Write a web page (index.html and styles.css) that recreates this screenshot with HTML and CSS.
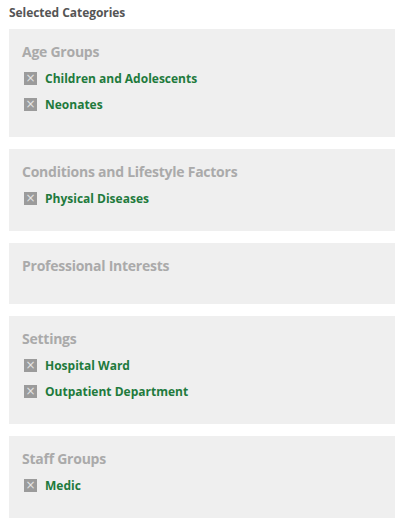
FILE: index.html
```html
<!DOCTYPE html>
<html>
<head>
<meta charset="utf-8">
<link rel="stylesheet" href="styles.css">
</head>
<body>
<div class="panel">
  <h2 class="title">Selected Categories</h2>
  <section class="group">
    <h3 class="group-name">Age Groups</h3>
    <ul class="items">
      <li class="item"><span class="remove">×</span><span class="label">Children and Adolescents</span></li>
      <li class="item"><span class="remove">×</span><span class="label">Neonates</span></li>
    </ul>
  </section>
  <section class="group">
    <h3 class="group-name">Conditions and Lifestyle Factors</h3>
    <ul class="items">
      <li class="item"><span class="remove">×</span><span class="label">Physical Diseases</span></li>
    </ul>
  </section>
  <section class="group">
    <h3 class="group-name">Professional Interests</h3>
    <ul class="items"></ul>
  </section>
  <section class="group">
    <h3 class="group-name">Settings</h3>
    <ul class="items">
      <li class="item"><span class="remove">×</span><span class="label">Hospital Ward</span></li>
      <li class="item"><span class="remove">×</span><span class="label">Outpatient Department</span></li>
    </ul>
  </section>
  <section class="group">
    <h3 class="group-name">Staff Groups</h3>
    <ul class="items">
      <li class="item"><span class="remove">×</span><span class="label">Medic</span></li>
    </ul>
  </section>
</div>
</body>
</html>
```
FILE: styles.css
```css
html, body {
  margin: 0;
  padding: 0;
  background: #fff;
}
body {
  font-family: "Open Sans", "DejaVu Sans", sans-serif;
}
.panel {
  width: 386px;
  padding: 4px 0 0 9px;
  display: flex;
  flex-direction: column;
  gap: 12px;
}
.title {
  margin: 0 0 -4px 0;
  font-size: 12px;
  font-weight: 700;
  color: #555;
  letter-spacing: -0.05px;
  line-height: 17px;
}
.group {
  background: #efefef;
  padding: 13px 13px 0 13px;
  display: flex;
  flex-direction: column;
}
.group-name {
  margin: 0;
  font-size: 14px;
  font-weight: 700;
  color: #aaa;
  letter-spacing: -0.25px;
  line-height: 20px;
  height: 28px;
}
.items {
  list-style: none;
  margin: -5px 0 0 0;
  padding: 0 0 20px 2px;
}
.items:empty {
  margin-top: 0;
}
.item {
  display: flex;
  align-items: center;
  height: 26px;
}
.remove {
  width: 13px;
  height: 13px;
  background: #9b9b9b;
  color: #e4e4e4;
  font-size: 12px;
  line-height: 13px;
  text-align: center;
  margin-right: 8px;
  font-family: "DejaVu Sans", sans-serif;
}
.label {
  font-size: 12px;
  font-weight: 700;
  color: #217a3c;
}
```
